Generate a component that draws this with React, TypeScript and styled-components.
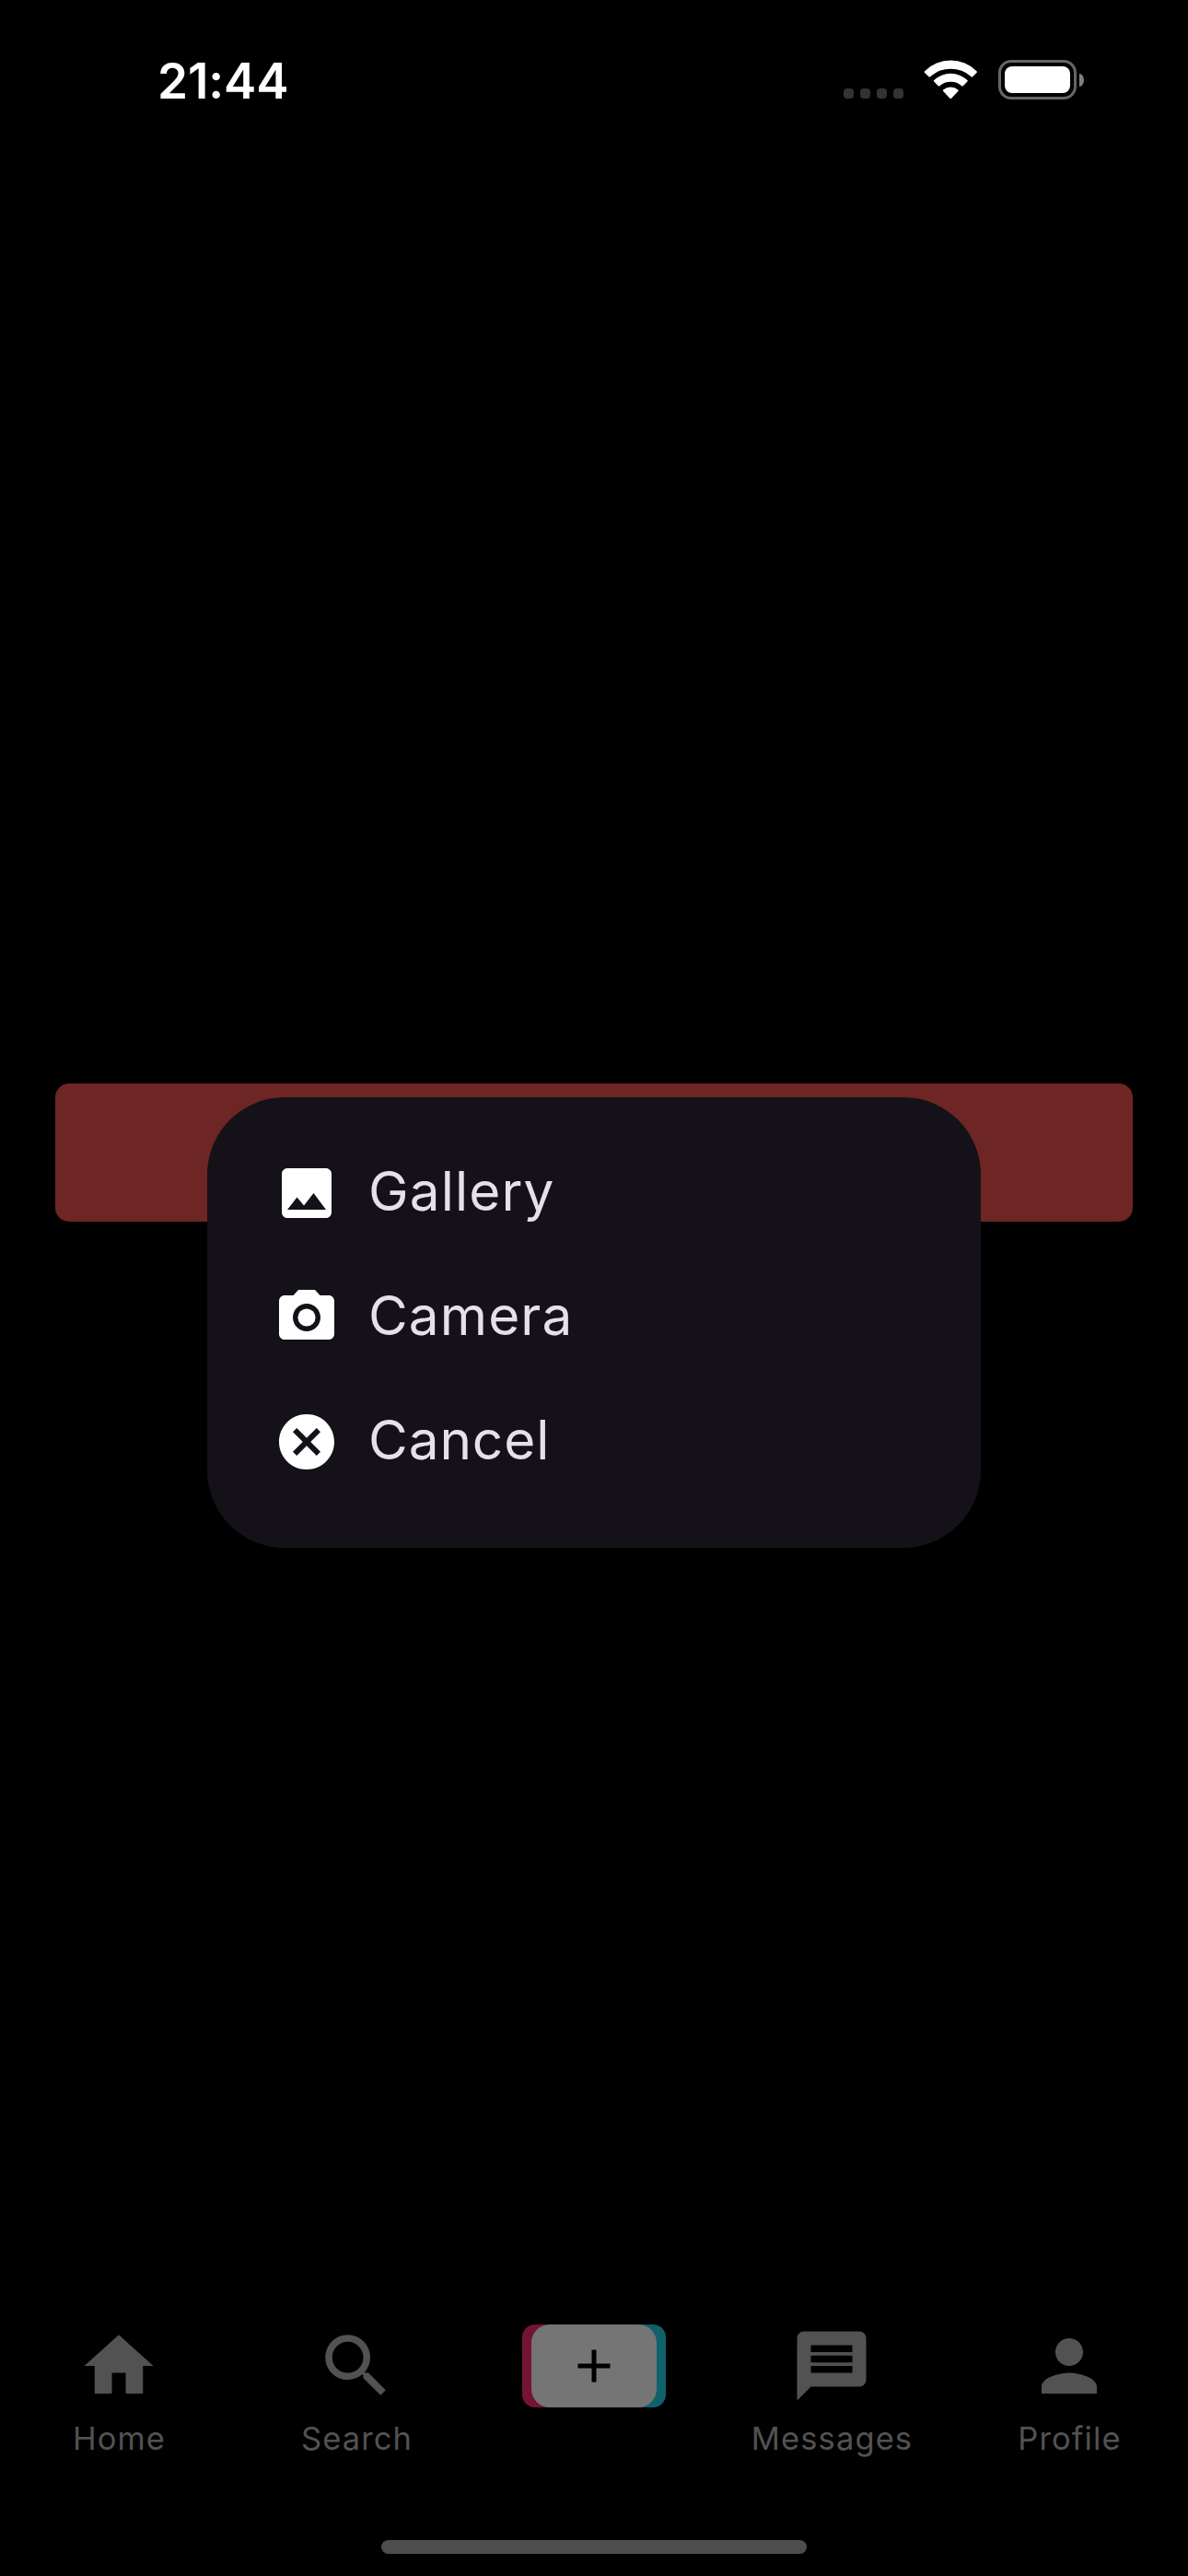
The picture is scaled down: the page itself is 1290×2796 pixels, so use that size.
import React from "react";
import styled, { createGlobalStyle } from "styled-components";

const GlobalStyle = createGlobalStyle`
  * { box-sizing: border-box; }
  body { margin: 0; background: #000; }
`;

const Screen = styled.div`
  position: relative;
  display: flex;
  flex-direction: column;
  width: 1290px;
  height: 2796px;
  overflow: hidden;
  background: #000;
  font-family: Inter, "Liberation Sans", sans-serif;
`;

const StatusBar = styled.header`
  display: flex;
  justify-content: space-between;
  align-items: flex-start;
  height: 177px;
  padding: 65px 113px 0 171px;
`;

const Time = styled.div`
  margin-top: 1px;
  color: #fff;
  font-size: 53px;
  font-weight: 600;
  line-height: 44px;
  letter-spacing: -0.1px;
`;

const StatusIcons = styled.div`
  display: flex;
  align-items: flex-start;
  height: 43px;
`;

const SignalDots = styled.div`
  display: flex;
  gap: 7px;
  margin: 31px 22px 0 0;
`;

const Dot = styled.span`
  width: 11px;
  height: 11px;
  border-radius: 4px;
  background: #333;
`;

const WifiGlyph = styled.svg`
  display: block;
  width: 59px;
  height: 44px;
  margin: -1px 22px 0 0;
  fill: #fff;
`;

const Battery = styled.div`
  display: flex;
  align-items: center;
  gap: 3px;
`;

const BatteryShell = styled.div`
  width: 85px;
  height: 43px;
  padding: 4px;
  border: 3px solid #666;
  border-radius: 14px;
`;

const BatteryLevel = styled.div`
  width: 71px;
  height: 29px;
  border-radius: 8px;
  background: #fff;
`;

const BatteryTip = styled.div`
  width: 5px;
  height: 14px;
  border-radius: 0 5px 5px 0 / 0 7px 7px 0;
  background: #808080;
`;

const Content = styled.main`
  flex: 1;
  padding: 999px 60px 0;
`;

const Banner = styled.div`
  height: 150px;
  border-radius: 15px;
  background: #6d2624;
`;

const BottomNav = styled.nav`
  display: grid;
  grid-template-columns: repeat(5, 258px);
  height: 234px;
`;

const NavItem = styled.div`
  display: flex;
  flex-direction: column;
  align-items: center;
  color: #525252;
`;

const NavLabel = styled.span`
  margin-top: 12px;
  padding-left: 1px;
  font-size: 34.5px;
  line-height: 44px;
  letter-spacing: 1.1px;
`;

const Icon = styled.svg<{ $size: number }>`
  display: block;
  flex: none;
  width: ${(p) => p.$size}px;
  height: ${(p) => p.$size}px;
  fill: currentColor;
`;

const CreateButton = styled.div`
  width: 156px;
  height: 90px;
  padding: 0 10px;
  border-radius: 14px;
  background: linear-gradient(90deg, #731532 50%, #0f616c 50%);
`;

const CreateFace = styled.div`
  display: flex;
  align-items: center;
  justify-content: center;
  width: 136px;
  height: 90px;
  border-radius: 20px;
  background: #757575;
  color: #000;
`;

const HomeIndicatorArea = styled.div`
  display: flex;
  justify-content: center;
  height: 39px;
`;

const HomeIndicator = styled.div`
  width: 462px;
  height: 15px;
  border-radius: 8px;
  background: #4d4d4d;
`;

const Overlay = styled.div`
  position: absolute;
  inset: 0;
  display: flex;
  align-items: center;
  justify-content: center;
  padding: 177px 0 102px;
`;

const Dialog = styled.div`
  display: flex;
  flex-direction: column;
  gap: 63px;
  width: 840px;
  height: 489px;
  padding: 68px 72px 0;
  border-radius: 84px;
  background: #141218;
`;

const Option = styled.div`
  display: flex;
  align-items: center;
  gap: 31px;
  height: 72px;
  color: #fff;
`;

const OptionLabel = styled.span<{ $spacing: number }>`
  padding-bottom: 4px;
  color: #e6e0e9;
  font-size: 58.5px;
  line-height: 72px;
  letter-spacing: ${(p) => p.$spacing}px;
`;

const paths = {
  home: "M10 20v-6h4v6h5v-8h3L12 3 2 12h3v8z",
  search:
    "M15.5 14h-.79l-.28-.27C15.41 12.59 16 11.11 16 9.5 16 5.91 13.09 3 9.5 3S3 5.91 3 9.5 5.91 16 9.5 16c1.61 0 3.09-.59 4.23-1.57l.27.28v.79l5 4.99L20.49 19l-4.99-5zm-6 0C7.01 14 5 11.99 5 9.5S7.01 5 9.5 5 14 7.01 14 9.5 11.99 14 9.5 14z",
  add: "M19 13h-6v6h-2v-6H5v-2h6V5h2v6h6v2z",
  message:
    "M20 2H4c-1.1 0-1.99.9-1.99 2L2 22l4-4h14c1.1 0 2-.9 2-2V4c0-1.1-.9-2-2-2zm-2 12H6v-2h12v2zm0-3H6V9h12v2zm0-3H6V6h12v2z",
  person:
    "M12 12c2.21 0 4-1.79 4-4s-1.79-4-4-4-4 1.79-4 4 1.79 4 4 4zm0 2c-2.67 0-8 1.34-8 4v2h16v-2c0-2.66-5.33-4-8-4z",
  image:
    "M21 19V5c0-1.1-.9-2-2-2H5c-1.1 0-2 .9-2 2v14c0 1.1.9 2 2 2h14c1.1 0 2-.9 2-2zM8.5 13.5l2.5 3.01L14.5 12l4.5 6H5l3.5-4.5z",
  camera:
    "M9 2L7.17 4H4c-1.1 0-2 .9-2 2v12c0 1.1.9 2 2 2h16c1.1 0 2-.9 2-2V6c0-1.1-.9-2-2-2h-3.17L15 2H9zm3 15c-2.76 0-5-2.24-5-5s2.24-5 5-5 5 2.24 5 5-2.24 5-5 5z",
  cancel:
    "M12 2C6.47 2 2 6.47 2 12s4.47 10 10 10 10-4.47 10-10S17.53 2 12 2zm5 13.59L15.59 17 12 13.41 8.41 17 7 15.59 10.59 12 7 8.41 8.41 7 12 10.59 15.59 7 17 8.41 13.41 12 17 15.59z",
};

type IconName = keyof typeof paths;

function Glyph({ name, size }: { name: IconName; size: number }) {
  return (
    <Icon viewBox="0 0 24 24" $size={size}>
      <path d={paths[name]} />
      {name === "camera" && <circle cx="12" cy="12" r="3.2" />}
    </Icon>
  );
}

function NavTab({ icon, label }: { icon: IconName; label: string }) {
  return (
    <NavItem>
      <Glyph name={icon} size={90} />
      <NavLabel>{label}</NavLabel>
    </NavItem>
  );
}

const options: { icon: IconName; label: string; spacing: number }[] = [
  { icon: "image", label: "Gallery", spacing: 1.1 },
  { icon: "camera", label: "Camera", spacing: 1.1 },
  { icon: "cancel", label: "Cancel", spacing: 0.9 },
];

export default function App() {
  return (
    <Screen>
      <GlobalStyle />
      <StatusBar>
        <Time>21:44</Time>
        <StatusIcons>
          <SignalDots>
            <Dot />
            <Dot />
            <Dot />
            <Dot />
          </SignalDots>
          <WifiGlyph viewBox="0 0 59 44">
            <path d="M1.1 13.2A40 40 0 0 1 57.5 13.2Q58.4 14.1 57.5 15L53.1 19.3Q52.4 20 51.6 19.3A33 33 0 0 0 7 19.3Q6.2 20 5.5 19.3L1.1 15Q.2 14.1 1.1 13.2Z" />
            <path d="M11.2 23A26.5 26.5 0 0 1 47.4 23Q48.2 23.8 47.4 24.6L42.8 29.2Q42 30 41.2 29.2A18 18 0 0 0 17.4 29.2Q16.6 30 15.8 29.2L11.2 24.6Q10.4 23.8 11.2 23Z" />
            <path d="M21.2 33.4A12.5 12.5 0 0 1 37.4 33.4Q38.3 34.2 37.4 35.1L30.1 42.7Q29.3 43.5 28.5 42.7L21.2 35.1Q20.3 34.2 21.2 33.4Z" />
          </WifiGlyph>
          <Battery>
            <BatteryShell>
              <BatteryLevel />
            </BatteryShell>
            <BatteryTip />
          </Battery>
        </StatusIcons>
      </StatusBar>
      <Content>
        <Banner />
      </Content>
      <BottomNav>
        <NavTab icon="home" label="Home" />
        <NavTab icon="search" label="Search" />
        <NavItem>
          <CreateButton>
            <CreateFace>
              <Glyph name="add" size={60} />
            </CreateFace>
          </CreateButton>
        </NavItem>
        <NavTab icon="message" label="Messages" />
        <NavTab icon="person" label="Profile" />
      </BottomNav>
      <HomeIndicatorArea>
        <HomeIndicator />
      </HomeIndicatorArea>
      <Overlay>
        <Dialog role="dialog">
          {options.map((o) => (
            <Option key={o.label}>
              <Glyph name={o.icon} size={72} />
              <OptionLabel $spacing={o.spacing}>{o.label}</OptionLabel>
            </Option>
          ))}
        </Dialog>
      </Overlay>
    </Screen>
  );
}
